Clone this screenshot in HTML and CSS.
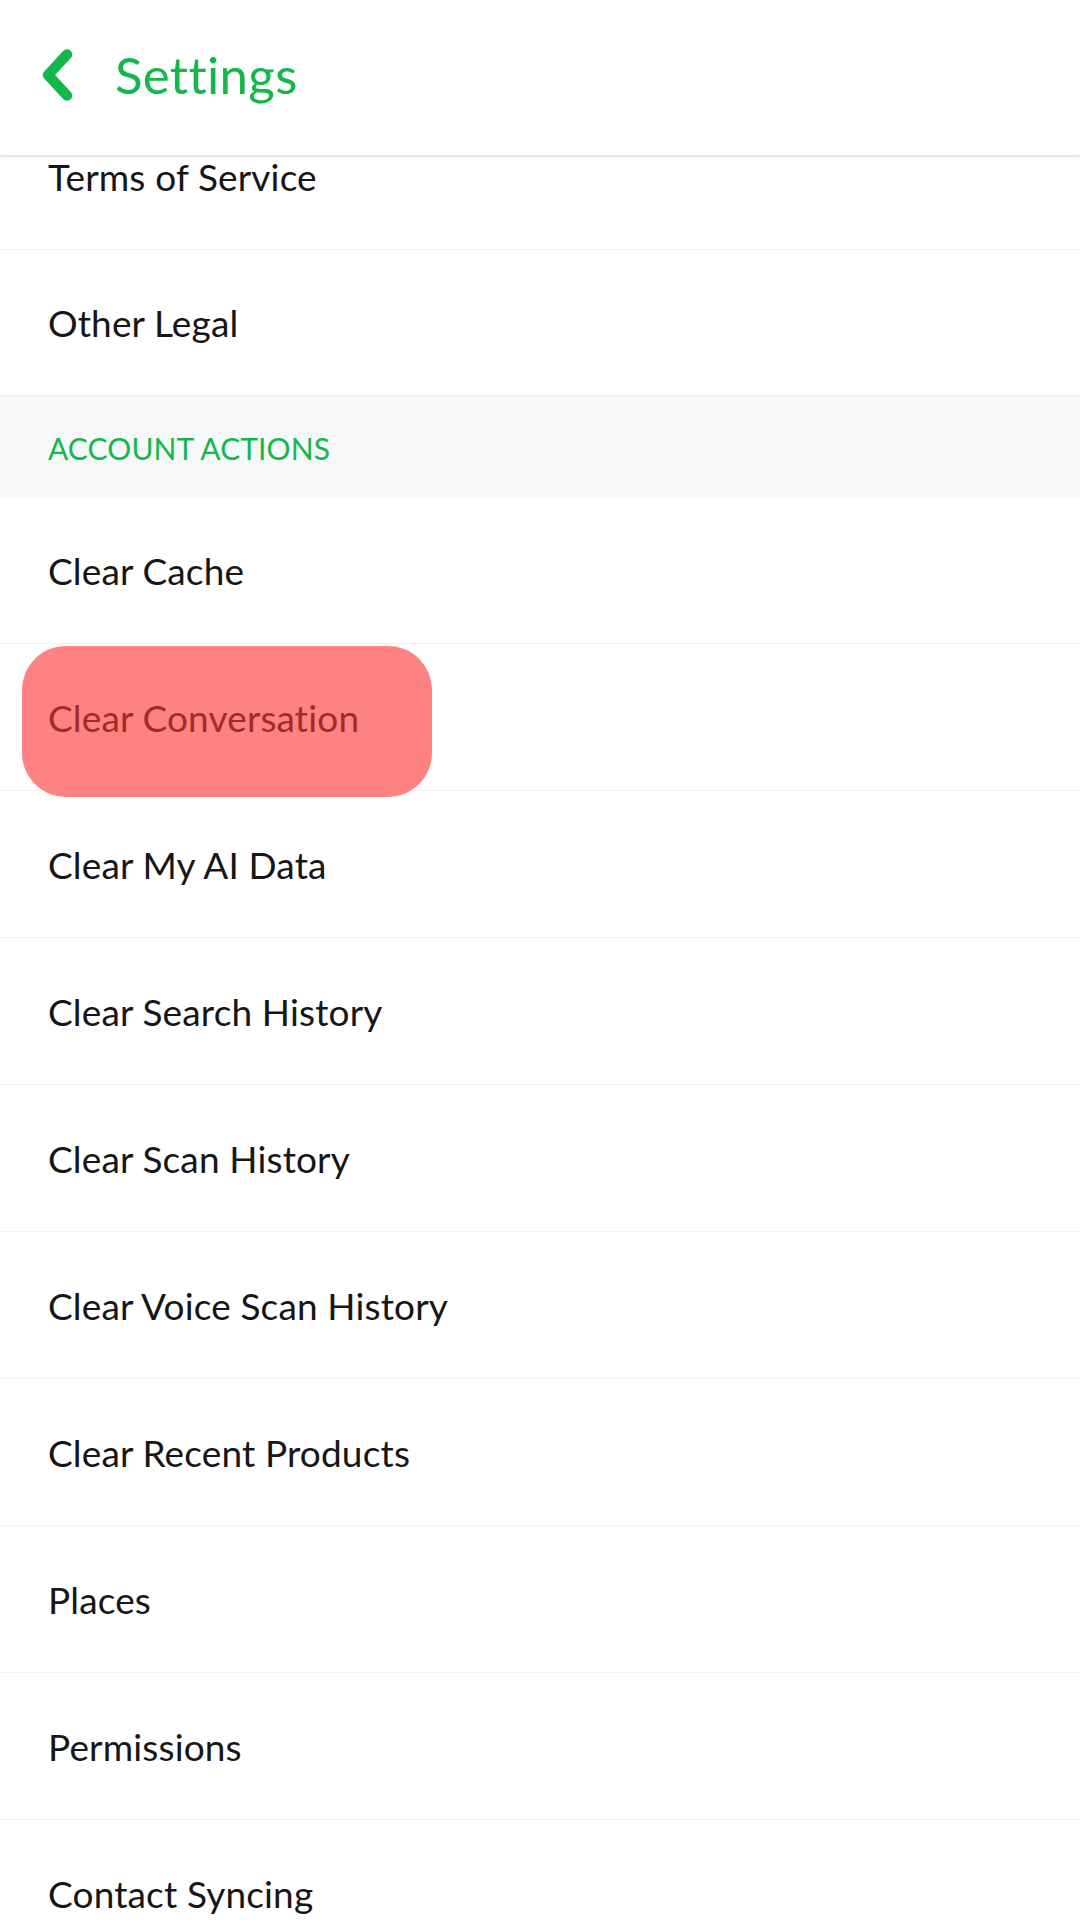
FILE: index.html
```html
<!DOCTYPE html>
<html lang="en">
<head>
<meta charset="utf-8">
<title>Settings</title>
<link rel="stylesheet" href="styles.css">
</head>
<body>
<div class="screen">
  <header class="topbar">
    <svg class="back" width="36" height="52" viewBox="0 0 36 52" aria-hidden="true">
      <path d="M27 5.5 L8 26 L27 46.5" fill="none" stroke="#14b84a" stroke-width="10.5" stroke-linecap="round" stroke-linejoin="round"/>
    </svg>
    <h1 class="title">Settings</h1>
  </header>
  <main class="content">
    <ul class="list">
      <li class="row"><span class="label">Terms of Service</span></li>
      <li class="row row-short"><span class="label">Other Legal</span></li>
      <li class="section">ACCOUNT ACTIONS</li>
      <li class="row"><span class="label">Clear Cache</span></li>
      <li class="row row-marked"><span class="mark"></span><span class="label label-marked">Clear Conversation</span></li>
      <li class="row"><span class="label">Clear My AI Data</span></li>
      <li class="row"><span class="label">Clear Search History</span></li>
      <li class="row"><span class="label">Clear Scan History</span></li>
      <li class="row"><span class="label">Clear Voice Scan History</span></li>
      <li class="row"><span class="label">Clear Recent Products</span></li>
      <li class="row"><span class="label">Places</span></li>
      <li class="row"><span class="label">Permissions</span></li>
      <li class="row"><span class="label">Contact Syncing</span></li>
    </ul>
  </main>
</div>
</body>
</html>
```

FILE: styles.css
```css
* {
  box-sizing: border-box;
}

html, body {
  margin: 0;
  padding: 0;
  background: #ffffff;
}

body {
  font-family: Lato, "Open Sans", "DejaVu Sans", sans-serif;
  color: #161616;
}

.screen {
  width: 1080px;
  height: 1920px;
  overflow: hidden;
  display: flex;
  flex-direction: column;
  background: #ffffff;
}

.topbar {
  position: relative;
  z-index: 3;
  flex: 0 0 157px;
  height: 157px;
  display: flex;
  align-items: center;
  padding-left: 40px;
  padding-bottom: 6px;
  background: #ffffff;
  border-bottom: 2px solid #e7e7e7;
  box-shadow: 0 2px 3px rgba(0, 0, 0, 0.04);
}

.back {
  display: block;
  flex: 0 0 auto;
}

.title {
  margin: 0 0 0 39px;
  font-size: 51px;
  font-weight: 400;
  color: #14b84a;
  letter-spacing: 0.3px;
}

.content {
  flex: 1 1 auto;
  overflow: hidden;
}

.list {
  list-style: none;
  margin: -54px 0 0 0;
  padding: 0;
}

.row {
  position: relative;
  height: 147px;
  display: flex;
  align-items: center;
  padding-left: 48px;
  border-bottom: 1px solid #f0f0f0;
  background: #ffffff;
  font-size: 37px;
  letter-spacing: 0.15px;
}

.row-short {
  height: 146px;
}

.row-marked {
  z-index: 2;
}

.section {
  height: 101px;
  display: flex;
  align-items: center;
  padding-left: 48px;
  padding-top: 2px;
  background: #f7f8f9;
  color: #14b84a;
  font-size: 30px;
  letter-spacing: 0.1px;
}

.label {
  position: relative;
  z-index: 1;
}

.label-marked {
  color: #a32a2a;
}

.mark {
  position: absolute;
  left: 22px;
  top: 2px;
  width: 410px;
  height: 151px;
  border-radius: 44px;
  background: #ff8282;
  z-index: 0;
}
```
